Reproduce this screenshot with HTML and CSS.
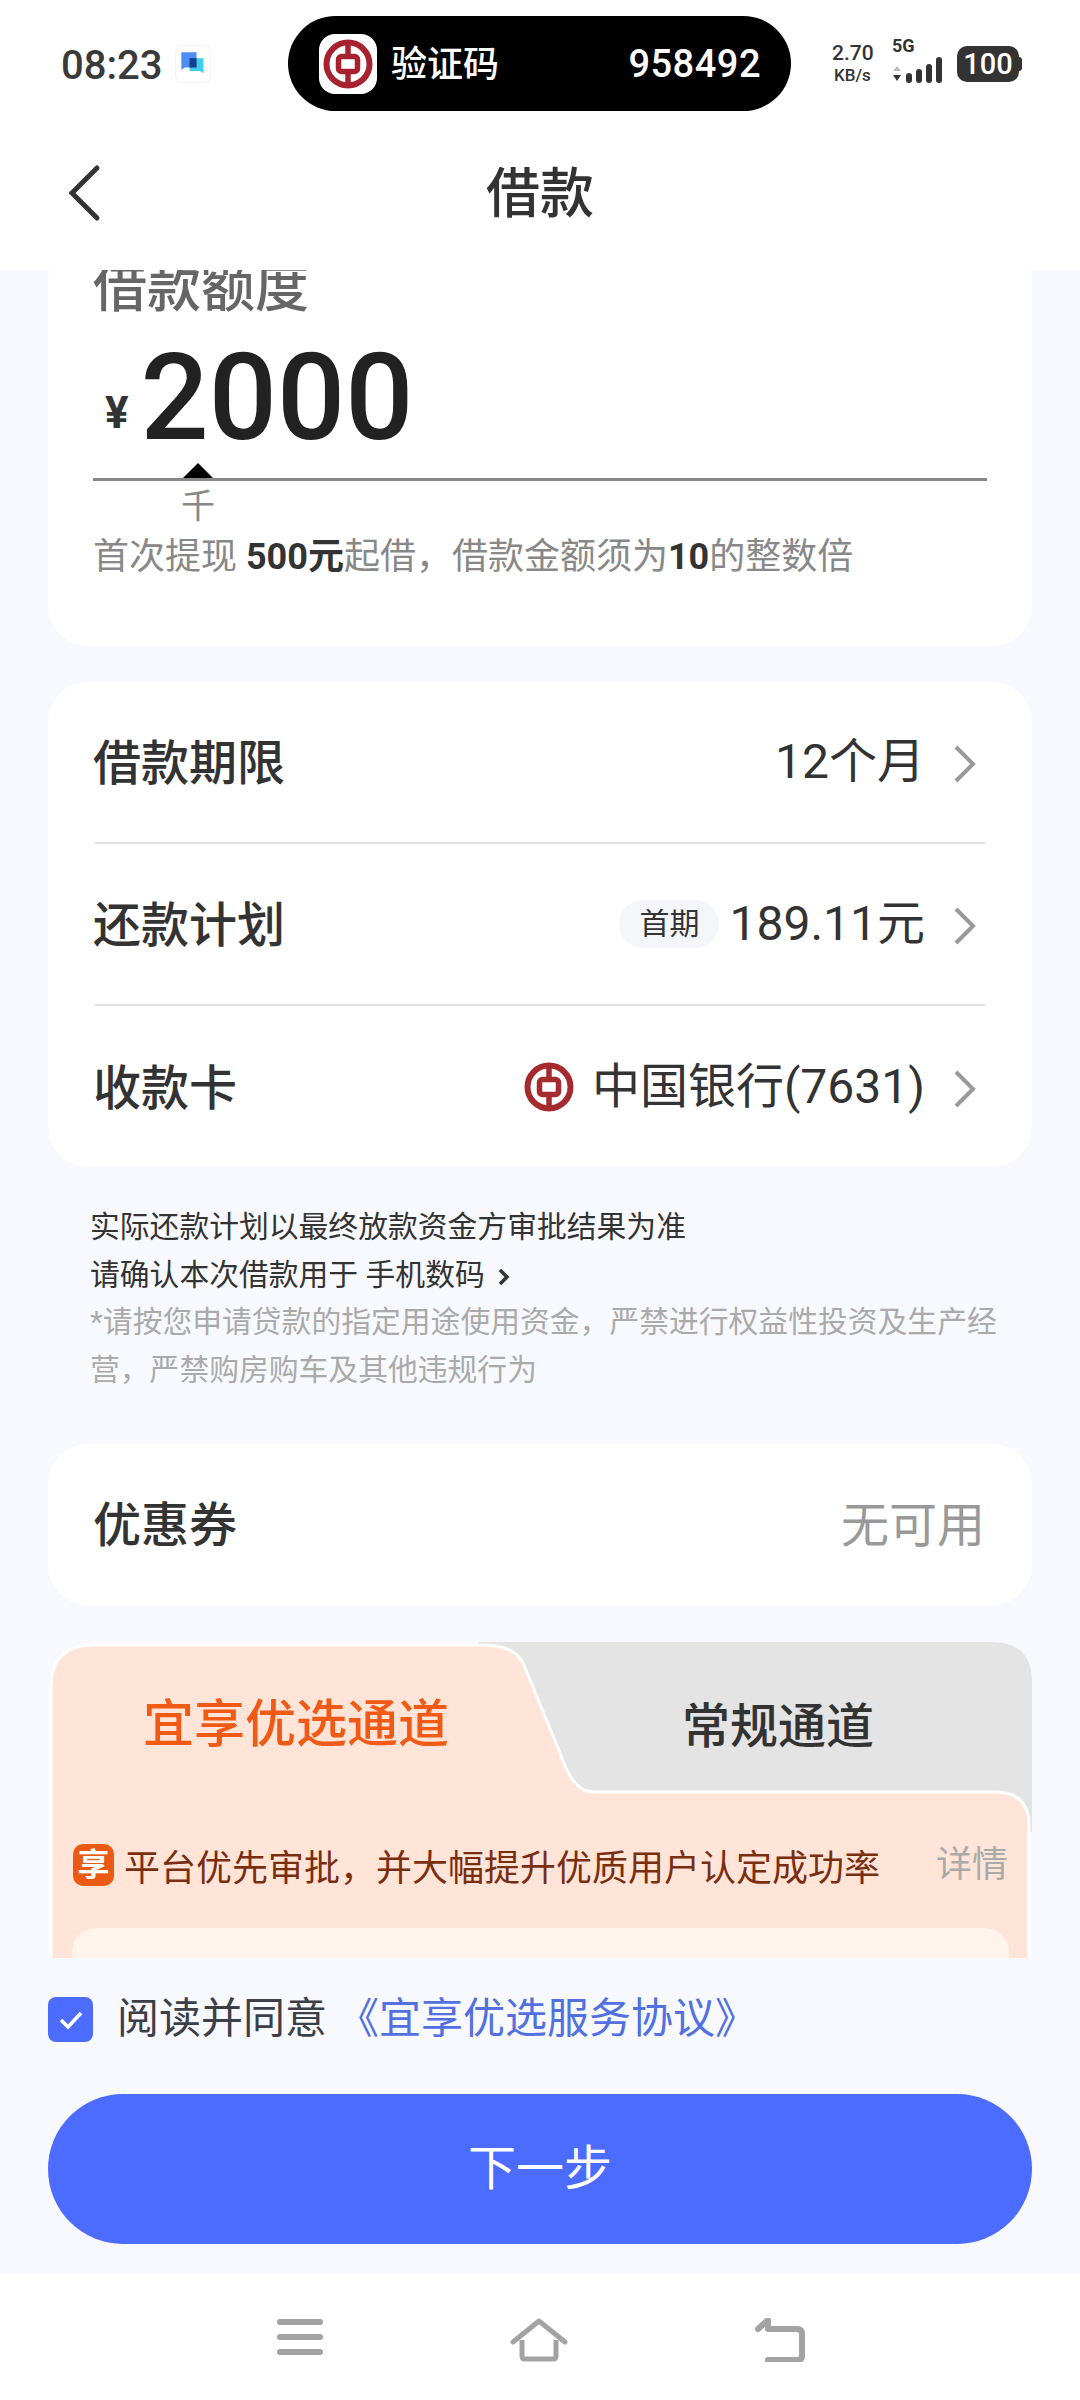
FILE: index.html
```html
<!DOCTYPE html>
<html lang="zh-CN">
<head>
    <meta charset="UTF-8">
    <meta name="viewport" content="width=device-width, initial-scale=1.0">
    <title>借款</title>
    <link rel="stylesheet" href="styles.css">
</head>
<body>

    <svg class="defs" width="0" height="0">
        <symbol id="boc" viewBox="0 0 50 50">
            <circle cx="25" cy="25" r="21.5" fill="none" stroke="currentColor" stroke-width="6"/>
            <rect x="15.5" y="17.5" width="19" height="15" rx="3" fill="none" stroke="currentColor" stroke-width="5.5"/>
            <path d="M25 3v14M25 33v14" stroke="currentColor" stroke-width="5.5"/>
        </symbol>
        <symbol id="chev" viewBox="0 0 22 38">
            <path d="M2 2l17 17L2 36" fill="none" stroke="currentColor" stroke-width="4"/>
        </symbol>
    </svg>

    <div class="top">
        <div class="status">
            <div class="status-left">
                <span class="clock">08:23</span>
                <span class="msg-icon">
                    <svg width="28" height="28" viewBox="0 0 24 24">
                        <path d="M9 7h12v13l-3-2H9z" fill="#3ed0e6"/>
                        <path d="M2 2h13v13H5l-3 2z" fill="#4d8df5"/>
                        <rect x="9" y="7" width="6" height="8" fill="#12408f"/>
                    </svg>
                </span>
            </div>
            <div class="sms-pill">
                <span class="sms-logo"><svg width="50" height="50"><use href="#boc"/></svg></span>
                <span class="sms-label">验证码</span>
                <span class="sms-code">958492</span>
            </div>
            <div class="status-right">
                <div class="speed"><b>2.70</b><span>KB/s</span></div>
                <div class="net">
                    <b>5G</b>
                    <svg width="54" height="26" viewBox="0 0 54 26">
                        <path d="M4 9l4 5H0z" fill="#bbb"/>
                        <path d="M4 24l4-6H0z" fill="#333"/>
                        <rect x="13" y="16" width="6" height="10" rx="3" fill="#333"/>
                        <rect x="23" y="12" width="6" height="14" rx="3" fill="#333"/>
                        <rect x="33" y="7" width="6" height="19" rx="3" fill="#333"/>
                        <rect x="43" y="0" width="6" height="26" rx="3" fill="#333"/>
                    </svg>
                </div>
                <div class="battery">100</div>
            </div>
        </div>
        <div class="titlebar">
            <svg class="back" width="36" height="58" viewBox="0 0 36 58">
                <path d="M31 4L6 29l25 25" fill="none" stroke="#333" stroke-width="5" stroke-linecap="round"/>
            </svg>
            <h1>借款</h1>
        </div>
    </div>

    <div class="scroll">
        <div class="scroll-inner">

            <div class="card amount-card">
                <div class="amount-label">借款额度</div>
                <div class="amount-row">
                    <span class="yen">¥</span>
                    <span class="amount">2000</span>
                </div>
                <div class="scale">
                    <span class="tick">千</span>
                </div>
                <p class="amount-tip">首次提现 <b>500元</b>起借，借款金额须为<b>10</b>的整数倍</p>
            </div>

            <div class="card rows">
                <div class="row">
                    <span class="row-name">借款期限</span>
                    <span class="row-value">12个月<svg class="chev" width="22" height="38"><use href="#chev"/></svg></span>
                </div>
                <div class="row">
                    <span class="row-name">还款计划</span>
                    <span class="row-value"><span class="tag">首期</span>189.11元<svg class="chev" width="22" height="38"><use href="#chev"/></svg></span>
                </div>
                <div class="row">
                    <span class="row-name">收款卡</span>
                    <span class="row-value"><svg class="bank" width="50" height="50"><use href="#boc"/></svg>中国银行(7631)<svg class="chev" width="22" height="38"><use href="#chev"/></svg></span>
                </div>
            </div>

            <div class="notes">
                <p>实际还款计划以最终放款资金方审批结果为准</p>
                <p>请确认本次借款用于 手机数码
                    <svg width="12" height="20" viewBox="0 0 12 20"><path d="M2 3l7 7-7 7" fill="none" stroke="#333" stroke-width="3.5"/></svg>
                </p>
                <p class="muted">*请按您申请贷款的指定用途使用资金，严禁进行权益性投资及生产经营，严禁购房购车及其他违规行为</p>
            </div>

            <div class="card coupon">
                <span class="row-name">优惠券</span>
                <span class="coupon-none">无可用</span>
            </div>

            <div class="channel">
                <svg class="channel-bg" width="984" height="316" viewBox="0 0 984 316">
                    <path d="M430 0H944Q984 0 984 40V190H430z" fill="#e4e4e4"/>
                    <path d="M3 330V45Q3 3 45 3H432C455 3 468 8 475 21L512 111C522 140 532 150 546 150H947Q981 150 981 184V330z" fill="#ffe4d7" stroke="#fff" stroke-width="3"/>
                </svg>
                <div class="tabs">
                    <span class="tab-on">宜享优选通道</span>
                    <span class="tab-off">常规通道</span>
                </div>
                <div class="perk">
                    <span class="perk-badge">享</span>
                    <span class="perk-text">平台优先审批，并大幅提升优质用户认定成功率</span>
                    <span class="perk-more">详情</span>
                </div>
                <div class="perk-card"></div>
            </div>

        </div>
    </div>

    <div class="footer">
        <div class="agree">
            <span class="check">
                <svg width="28" height="24" viewBox="0 0 28 24"><path d="M4 12l7 7L24 5" fill="none" stroke="#fff" stroke-width="3.5"/></svg>
            </span>
            <span class="agree-text">阅读并同意</span>
            <a class="agree-link">《宜享优选服务协议》</a>
        </div>
        <button class="next">下一步</button>
    </div>

    <div class="navbar">
        <svg width="46" height="38" viewBox="0 0 46 38">
            <path d="M3 4h40M3 19h40M3 34h40" stroke="#a3a3a3" stroke-width="6" stroke-linecap="round"/>
        </svg>
        <svg width="58" height="44" viewBox="0 0 58 44">
            <path d="M3 24L29 3l26 21" fill="none" stroke="#a3a3a3" stroke-width="5" stroke-linecap="round" stroke-linejoin="round"/>
            <path d="M12 22v16q0 3 3 3h28q3 0 3-3V22" fill="none" stroke="#a3a3a3" stroke-width="5"/>
        </svg>
        <svg width="50" height="44" viewBox="0 0 50 44">
            <path d="M3 11L13 2v9h29q5 0 5 5v22q0 4-5 4H13" fill="none" stroke="#a3a3a3" stroke-width="6" stroke-linejoin="round" stroke-linecap="round"/>
        </svg>
    </div>

</body>
</html>
```

FILE: styles.css
```css
* {
    box-sizing: border-box;
}

body {
    margin: 0;
    width: 1080px;
    height: 2400px;
    overflow: hidden;
    background-color: #f8f9fe;
    color: #333;
    font-family: Roboto, "Noto Sans CJK SC", sans-serif;
    display: flex;
    flex-direction: column;
}

p, h1 {
    margin: 0;
}

.defs {
    position: absolute;
}

/* status bar and title */
.top {
    height: 270px;
    background-color: #fff;
}

.status {
    height: 127px;
    padding: 16px 59px 0 61px;
    display: flex;
    align-items: flex-start;
}

.status-left {
    width: 227px;
    height: 95px;
    display: flex;
    align-items: center;
    gap: 14px;
}

.clock {
    font-size: 40px;
    font-weight: 500;
    color: #3a3a3a;
    margin-top: 3px;
}

.msg-icon {
    width: 34px;
    height: 36px;
    border-radius: 6px;
    background-color: #fff;
    box-shadow: 0 0 2px rgba(0, 0, 0, 0.15);
    display: flex;
    align-items: center;
    justify-content: center;
}

.sms-pill {
    width: 503px;
    height: 95px;
    border-radius: 48px;
    background-color: #000;
    color: #fff;
    padding: 0 30px 0 31px;
    display: flex;
    align-items: center;
}

.sms-logo {
    width: 58px;
    height: 60px;
    border-radius: 16px;
    background-color: #fff;
    color: #a8212e;
    display: flex;
    align-items: center;
    justify-content: center;
}

.sms-label {
    margin-left: 14px;
    margin-top: -5px;
    font-size: 36px;
    font-weight: 500;
}

.sms-code {
    margin-left: auto;
    font-size: 38px;
    font-weight: 500;
    letter-spacing: 0.5px;
}

.status-right {
    flex: 1;
    height: 95px;
    padding-left: 41px;
    display: flex;
    align-items: center;
    color: #333;
}

.speed {
    width: 60px;
    display: flex;
    flex-direction: column;
    align-items: flex-start;
    font-size: 17px;
    line-height: 22px;
    font-weight: 500;
}

.speed b {
    font-size: 21px;
    font-weight: 500;
}

.speed span {
    margin-left: 2px;
}

.net {
    width: 65px;
    height: 40px;
    position: relative;
}

.net b {
    position: absolute;
    left: 0;
    top: -9px;
    font-size: 18px;
    font-weight: 700;
}

.net svg {
    position: absolute;
    left: 1px;
    top: 13px;
}

.battery {
    width: 62px;
    height: 36px;
    border-radius: 10px;
    background-color: #333;
    color: #fff;
    font-size: 29px;
    font-weight: 500;
    line-height: 36px;
    text-align: center;
    flex-shrink: 0;
    position: relative;
}

.battery::after {
    content: "";
    position: absolute;
    right: -3px;
    top: 11px;
    width: 3px;
    height: 14px;
    border-radius: 0 3px 3px 0;
    background-color: #333;
}

.titlebar {
    height: 143px;
    position: relative;
    display: flex;
    align-items: center;
    justify-content: center;
}

.titlebar h1 {
    font-size: 54px;
    font-weight: 500;
    color: #333;
    margin-top: -19px;
}

.back {
    position: absolute;
    left: 66px;
    top: 37px;
}

/* scrolling part, already scrolled a little */
.scroll {
    height: 1688px;
    overflow: hidden;
}

.scroll-inner {
    margin-top: -30px;
    padding: 0 48px;
}

.card {
    background-color: #fff;
    border-radius: 40px;
}

.amount-card {
    height: 406px;
    padding: 19px 45px 0;
}

.amount-label {
    font-size: 54px;
    line-height: 60px;
    font-weight: 500;
    color: #666;
}

.amount-row {
    height: 159px;
    padding-left: 12px;
    display: flex;
    align-items: center;
    gap: 12px;
}

.yen {
    font-size: 44px;
    font-weight: 700;
    margin-top: 28px;
}

.amount {
    font-size: 120px;
    font-weight: 500;
    color: #222;
    line-height: 135px;
}

.scale {
    border-top: 3px solid #888;
    height: 54px;
    padding-left: 88px;
    position: relative;
}

.scale::before {
    content: "";
    position: absolute;
    left: 90px;
    top: -18px;
    border-left: 15px solid transparent;
    border-right: 15px solid transparent;
    border-bottom: 15px solid #000;
}

.tick {
    font-size: 34px;
    line-height: 50px;
    color: #888;
    display: block;
}

.amount-tip {
    font-size: 36px;
    line-height: 50px;
    color: #888;
}

.amount-tip b {
    color: #333;
}

.rows {
    margin-top: 36px;
    height: 485px;
    padding: 0 47px;
}

.row {
    height: 162px;
    border-bottom: 2px solid #e0e0e0;
    display: flex;
    align-items: center;
    justify-content: space-between;
}

.row:last-child {
    border-bottom: none;
}

.row-name {
    font-size: 48px;
    font-weight: 500;
    color: #333;
    margin-left: -2px;
    margin-top: -7px;
}

.row-value {
    display: flex;
    align-items: center;
    font-size: 48px;
    color: #333;
    line-height: 60px;
}

.chev {
    margin-left: 29px;
    margin-right: 9px;
    margin-top: 3px;
    color: #999;
}

.tag {
    width: 100px;
    height: 48px;
    border-radius: 24px;
    background-color: #f4f6fa;
    font-size: 30px;
    line-height: 48px;
    text-align: center;
    margin-right: 10px;
}

.bank {
    color: #a52a2e;
    margin-right: 18px;
}

.notes {
    margin-top: 36px;
    padding: 0 28px 0 42px;
    font-size: 29.8px;
    line-height: 47.5px;
    color: #333;
}

.notes svg {
    margin-left: 6px;
    vertical-align: -2px;
}

.muted {
    color: #aaa;
}

.coupon {
    margin-top: 51px;
    height: 161px;
    padding: 0 47px;
    display: flex;
    align-items: center;
    justify-content: space-between;
}

.coupon-none {
    font-size: 48px;
    color: #999;
    margin-top: -7px;
}

.channel {
    margin-top: 37px;
    height: 330px;
    position: relative;
    overflow: hidden;
}

.channel-bg {
    position: absolute;
    left: 0;
    top: 0;
}

.tabs {
    position: relative;
    height: 150px;
    display: flex;
    align-items: center;
}

.tab-on {
    margin-left: 95px;
    font-size: 51px;
    font-weight: 500;
    color: #f05a14;
    padding-top: 5px;
}

.tab-off {
    margin-left: 233px;
    font-size: 48px;
    font-weight: 500;
    color: #333;
    padding-top: 9px;
}

.perk {
    position: relative;
    margin-top: 48px;
    padding: 0 24px 0 25px;
    height: 50px;
    display: flex;
    align-items: center;
}

.perk-badge {
    width: 41px;
    height: 42px;
    border-radius: 10px;
    background-color: #ea5a12;
    color: #fff;
    font-size: 32px;
    font-weight: 700;
    line-height: 42px;
    text-align: center;
}

.perk-text {
    margin-left: 10px;
    font-size: 36px;
    color: #7a2e10;
}

.perk-more {
    margin-left: auto;
    font-size: 36px;
    color: #aaa;
    margin-top: -8px;
}

.perk-card {
    position: relative;
    margin: 38px 23px 0 24px;
    height: 60px;
    border-radius: 24px;
    background-color: #fff4ec;
}

/* agreement and button */
.footer {
    height: 315px;
    padding: 39px 48px 0;
}

.agree {
    height: 45px;
    display: flex;
    align-items: center;
    font-size: 42px;
    color: #3c3f48;
}

.agree-text {
    margin-top: -10px;
    margin-left: -1px;
}

.agree-link {
    margin-left: 10px;
    margin-top: -10px;
    font-size: 42px;
    color: #5270e0;
}

.check {
    width: 45px;
    height: 45px;
    border-radius: 8px;
    background-color: #4c6bff;
    margin-right: 25px;
    display: flex;
    align-items: center;
    justify-content: center;
}

.next {
    display: block;
    margin-top: 52px;
    width: 984px;
    height: 150px;
    padding-bottom: 12px;
    border: none;
    border-radius: 75px;
    background-color: #4c6bff;
    color: #fff;
    font-family: Roboto, "Noto Sans CJK SC", sans-serif;
    font-size: 48px;
}

.navbar {
    flex: 1;
    background-color: #fff;
    padding: 45px 275px 0 277px;
    display: flex;
    justify-content: space-between;
    align-items: flex-start;
}
```
